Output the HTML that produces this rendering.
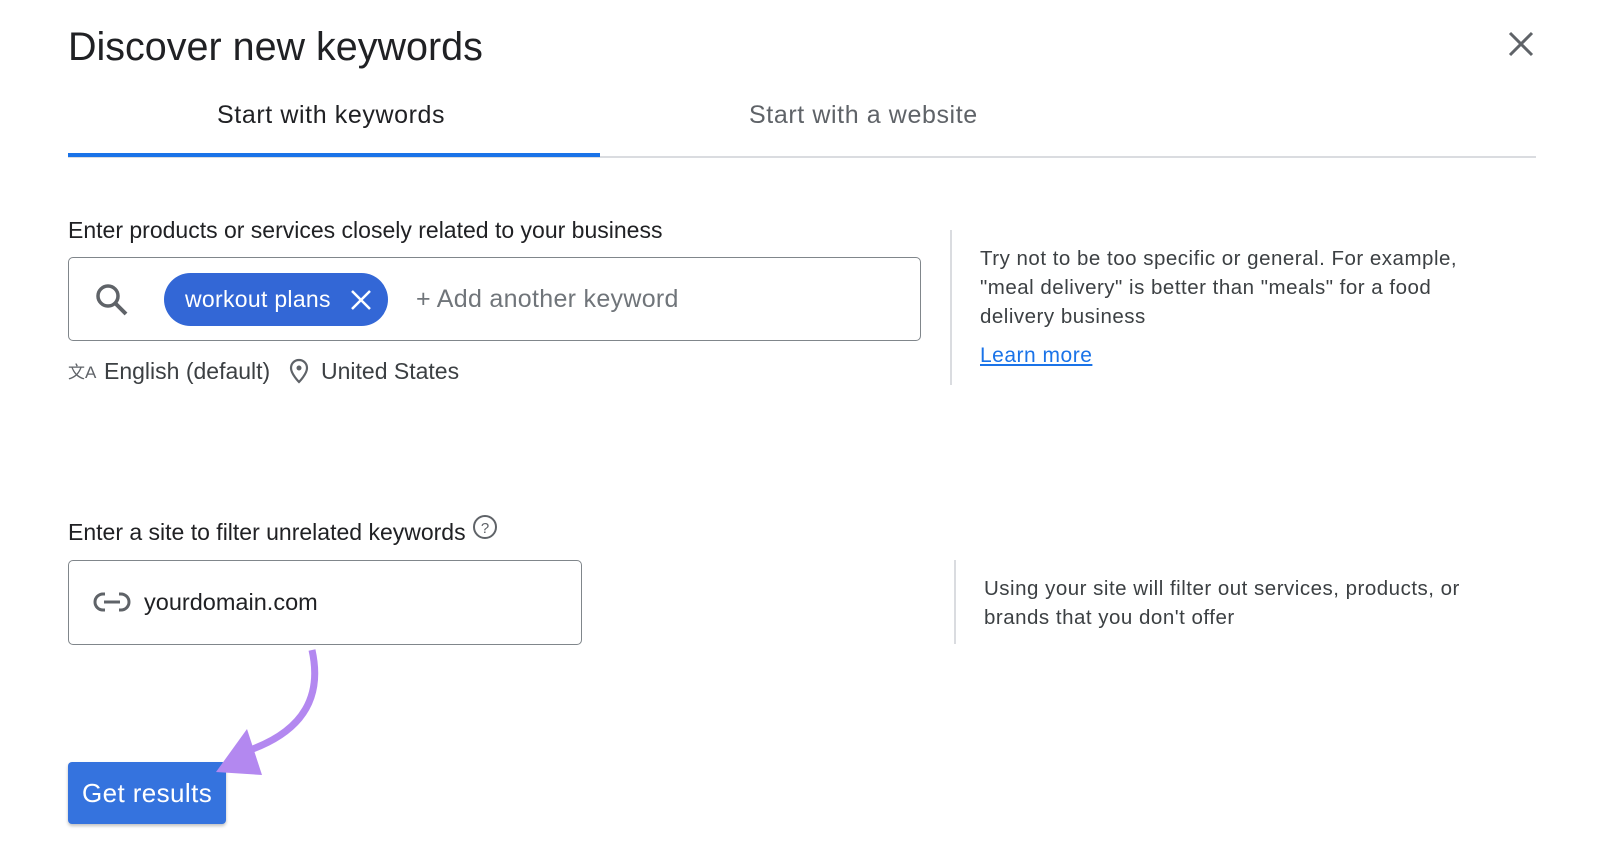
<!DOCTYPE html>
<html><head><style>
body{margin:0;width:1600px;height:865px;background:#fff;font-family:"Liberation Sans",Arial,sans-serif;color:#202124;position:relative;overflow:hidden}
.a{position:absolute;white-space:nowrap}
</style></head><body>
<div class="a" style="left:68px;top:25px;font-size:39.5px;color:#202124">Discover new keywords</div>
<svg class="a" style="left:1507px;top:30px" width="28" height="28"><path d="M3 3L25 25M25 3L3 25" stroke="#5f6368" stroke-width="3"/></svg>
<div class="a" style="left:217px;top:101px;font-size:25px;letter-spacing:0.6px;color:#202124">Start with keywords</div>
<div class="a" style="left:749px;top:101px;font-size:25px;letter-spacing:0.6px;color:#5f6368">Start with a website</div>
<div class="a" style="left:68px;top:156px;width:1468px;height:2px;background:#dadce0"></div>
<div class="a" style="left:68px;top:153px;width:532px;height:4px;background:#1a73e8"></div>

<div class="a" style="left:68px;top:217px;font-size:23px">Enter products or services closely related to your business</div>
<div class="a" style="left:68px;top:257px;width:851px;height:82px;border:1.5px solid #80868b;border-radius:5px"></div>
<svg class="a" style="left:94px;top:282px" width="36" height="36"><circle cx="14" cy="14" r="10" fill="none" stroke="#5f6368" stroke-width="3.5"/><path d="M21 21L32 32" stroke="#5f6368" stroke-width="4"/></svg>
<div class="a" style="left:164px;top:273px;width:224px;height:53px;background:#3367d6;border-radius:27px"></div>
<div class="a" style="left:185px;top:286px;font-size:23px;letter-spacing:0.3px;color:#fff">workout plans</div>
<svg class="a" style="left:350px;top:289px" width="22" height="22"><path d="M2 2L20 20M20 2L2 20" stroke="#fff" stroke-width="2.5"/></svg>
<div class="a" style="left:416px;top:285px;font-size:25px;letter-spacing:0.3px;color:#70757a">+ Add another keyword</div>
<div class="a" style="left:68px;top:358px;font-size:17px;color:#5f6368">文A</div>
<div class="a" style="left:104px;top:358px;font-size:23px;color:#3c4043">English (default)</div>
<svg class="a" style="left:289px;top:358px" width="20" height="26"><path d="M10 2C5 2 2 6 2 10c0 6 8 14 8 14s8-8 8-14c0-4-3-8-8-8z" fill="none" stroke="#5f6368" stroke-width="2.2"/><circle cx="10" cy="10" r="2.5" fill="#5f6368"/></svg>
<div class="a" style="left:321px;top:358px;font-size:23px;color:#3c4043">United States</div>

<div class="a" style="left:950px;top:230px;width:2px;height:155px;background:#dadce0"></div>
<div class="a" style="left:980px;top:244px;font-size:20.5px;letter-spacing:0.5px;line-height:29px;color:#3c4043;white-space:normal;width:510px">Try not to be too specific or general. For example, "meal delivery" is better than "meals" for a food delivery business</div>
<div class="a" style="left:980px;top:344px;font-size:21px;letter-spacing:0.5px;color:#1a73e8;text-decoration:underline">Learn more</div>

<div class="a" style="left:68px;top:519px;font-size:23px">Enter a site to filter unrelated keywords</div>
<svg class="a" style="left:472px;top:514px" width="26" height="26"><circle cx="13" cy="13" r="11" fill="none" stroke="#5f6368" stroke-width="2"/><text x="13" y="19" font-size="15" text-anchor="middle" fill="#5f6368" font-family="Liberation Sans">?</text></svg>
<div class="a" style="left:68px;top:560px;width:512px;height:83px;border:1.5px solid #80868b;border-radius:5px"></div>
<svg class="a" style="left:93px;top:591px" width="38" height="22"><rect x="2" y="3" width="19" height="16" rx="8" fill="none" stroke="#5f6368" stroke-width="3"/><rect x="17" y="3" width="19" height="16" rx="8" fill="none" stroke="#5f6368" stroke-width="3"/><rect x="12" y="0" width="14" height="22" fill="#fff"/><path d="M11 11H27" stroke="#5f6368" stroke-width="3"/></svg>
<div class="a" style="left:144px;top:589px;font-size:23.5px">yourdomain.com</div>
<div class="a" style="left:954px;top:560px;width:2px;height:84px;background:#dadce0"></div>
<div class="a" style="left:984px;top:574px;font-size:20.5px;letter-spacing:0.5px;line-height:29px;color:#3c4043;white-space:normal;width:510px">Using your site will filter out services, products, or brands that you don't offer</div>

<div class="a" style="left:68px;top:762px;width:158px;height:62px;background:#3573de;border-radius:4px;box-shadow:0 2px 3px rgba(0,0,0,.25)"></div>
<div class="a" style="left:82px;top:778px;font-size:26px;letter-spacing:0.4px;color:#fff">Get results</div>
<svg class="a" style="left:210px;top:645px" width="120" height="140"><path d="M102 5C112 50 95 85 40 105" fill="none" stroke="#b388f0" stroke-width="7"/><path d="M6 127L37 84L52 130Z" fill="#b388f0"/></svg>
</body></html>
